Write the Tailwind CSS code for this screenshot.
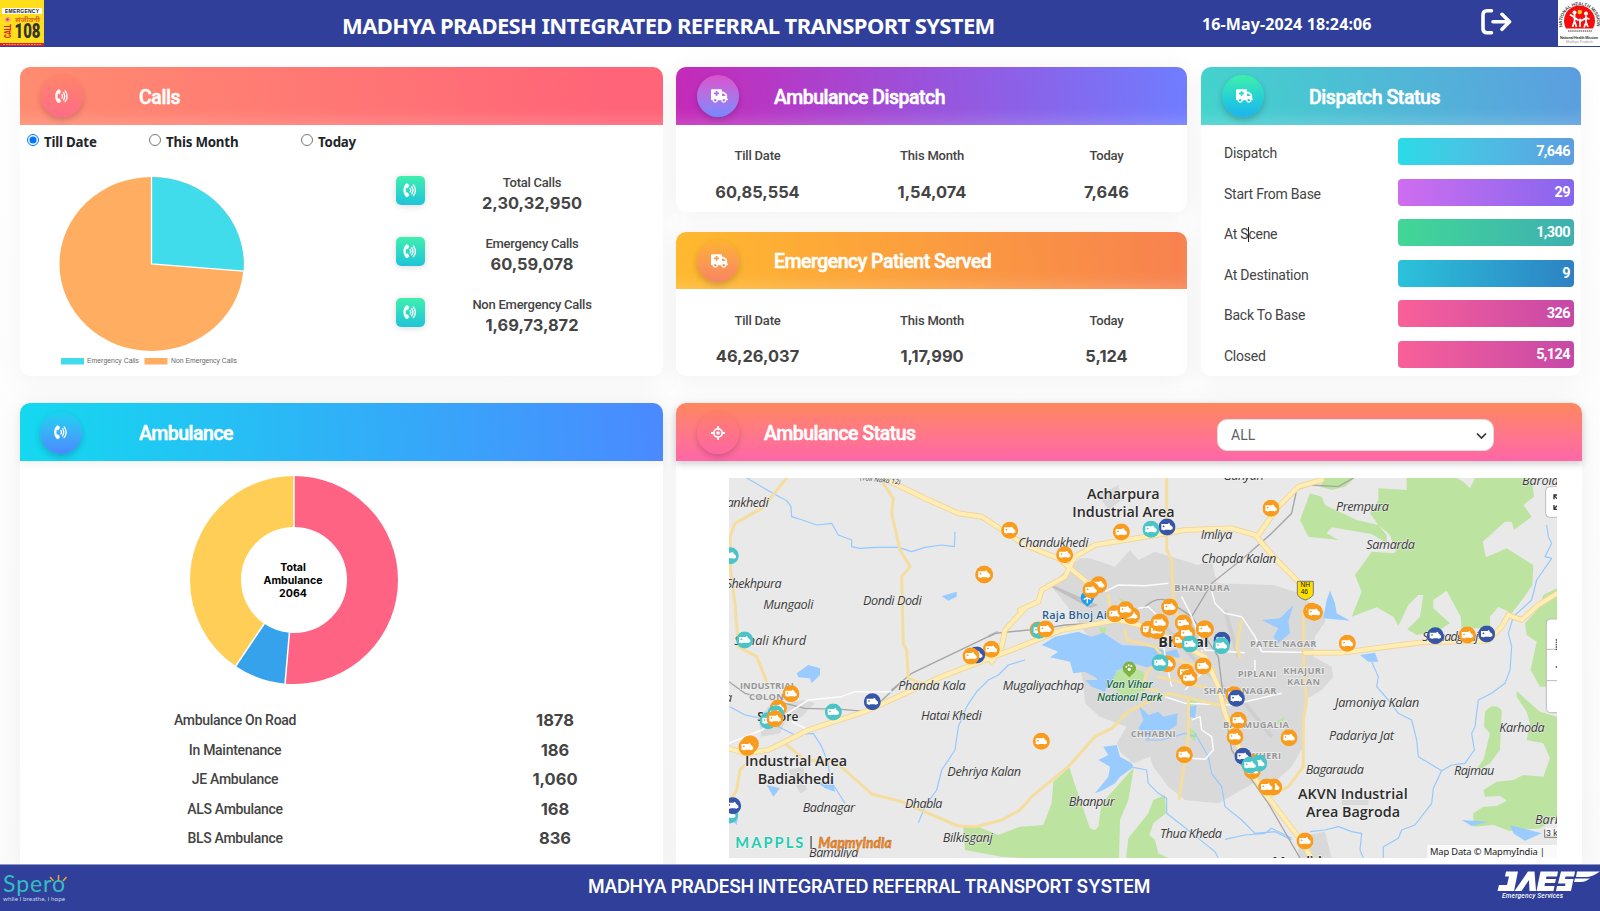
<!DOCTYPE html>
<html lang="en">
<head>
<meta charset="utf-8">
<title>Madhya Pradesh Integrated Referral Transport System</title>
<script src="https://cdn.jsdelivr.net/npm/@tailwindcss/browser@4"></script>
</head>
<body class="bg-white overflow-hidden h-[911px] w-[1600px] flex flex-col font-['Roboto',sans-serif] text-[#444]">

<!-- Icon definitions -->
<svg class="hidden">
  <symbol id="phone" viewBox="0 0 470 512">
    <path fill="currentColor" stroke="currentColor" stroke-width="14" d="M97.333 490.966c-129.874-129.874-129.681-340.252 0-469.933 5.698-5.698 14.527-6.632 21.263-2.422l64.817 40.513a17.187 17.187 0 0 1 6.849 20.958l-32.408 81.021a17.188 17.188 0 0 1-17.669 10.719l-55.81-5.58c-21.051 58.261-20.612 122.471 0 179.515l55.811-5.581a17.188 17.188 0 0 1 17.669 10.719l32.408 81.022a17.188 17.188 0 0 1-6.849 20.958l-64.817 40.513a17.19 17.19 0 0 1-21.263-2.422z"/>
    <path fill="none" stroke="currentColor" stroke-width="48" stroke-linecap="round" d="M232 194q38 62 0 124M288 130q88 126 0 252M346 66q144 190 0 380"/>
  </symbol>
  <symbol id="truck" viewBox="0 0 640 512">
    <path fill="currentColor" fill-rule="evenodd" d="M0 48C0 21.5 21.5 0 48 0H368c26.5 0 48 21.5 48 48V96h50.7c17 0 33.3 6.7 45.3 18.7L589.3 192c12 12 18.7 28.3 18.7 45.3V352c17.7 0 32 14.3 32 32s-14.3 32-32 32H576c0 53-43 96-96 96s-96-43-96-96H256c0 53-43 96-96 96s-96-43-96-96H48c-26.5 0-48-21.5-48-48V48zM416 256H544V237.3L466.7 160H416v96zM160 464a48 48 0 1 0 0-96 48 48 0 1 0 0 96zm368-48a48 48 0 1 0-96 0 48 48 0 1 0 96 0zM176 80v48h-48c-8.8 0-16 7.2-16 16v32c0 8.8 7.2 16 16 16h48v48c0 8.8 7.2 16 16 16h32c8.8 0 16-7.2 16-16V192h48c8.8 0 16-7.2 16-16V144c0-8.8-7.2-16-16-16H240V80c0-8.8-7.2-16-16-16H192c-8.8 0-16 7.2-16 16z"/>
  </symbol>
  <symbol id="van" viewBox="-26 -26 52 52">
    <circle r="25.5" fill="currentColor"/>
    <path fill="#fff" fill-rule="evenodd" d="M-17-9H3L4-11H8L9-7L17 0V7H14A4 3 0 0 1 7 8H-6A4 3 0 0 1-13 8H-17ZM-11-5V-3H-13V-1H-11V1H-9V-1H-7V-3H-9V-5Z"/>
  </symbol>
</svg>

<header class="h-[47px] shrink-0 bg-[#30409a] flex items-start text-white">
  <svg class="w-11 h-[46px]" viewBox="0 0 44 46">
    <rect width="44" height="46" fill="#ffdf1b"/>
    <rect x="2" y="8" width="40" height="6" fill="#fff"/>
    <text x="5" y="13" font-family="Liberation Sans" font-weight="700" font-size="5" textLength="34" fill="#222">EMERGENCY</text>
    <circle cx="7.500" cy="19.500" r="2.800" fill="#f3a58a"/><circle cx="7.500" cy="19.500" r="1.200" fill="#d8392b"/>
    <text x="15" y="22" font-family="Noto Sans, sans-serif" font-weight="700" font-size="7" textLength="25" lengthAdjust="spacingAndGlyphs" fill="#e06a1c">संजीवनी</text>
    <text x="14.500" y="38" font-family="Roboto" font-weight="900" font-size="20" textLength="26" lengthAdjust="spacingAndGlyphs" fill="#333">108</text>
    <text transform="translate(11 38) rotate(-90)" font-family="Roboto" font-weight="900" font-size="9.500" textLength="14" lengthAdjust="spacingAndGlyphs" fill="#d9261c">CALL</text>
    <rect y="43" width="44" height="3" fill="#d8262b"/>
    <path d="M3 44.500H41" stroke="#f3a0a0" stroke-width=".8" stroke-dasharray="2 .8"/>
  </svg>
  <div class="w-[651px] ml-[298px] mt-[10px] text-[22px] leading-[30px] font-bold font-['Noto_Sans',sans-serif] whitespace-nowrap tracking-[-0.62px]">MADHYA PRADESH INTEGRATED REFERRAL TRANSPORT SYSTEM</div>
  <div class="w-[170px] ml-[209px] mt-[14px] text-[16px] leading-5 font-bold font-['Noto_Sans',sans-serif] whitespace-nowrap tracking-[0.130px]">16-May-2024 18:24:06</div>
  <svg class="w-[31px] h-[27px] mt-2 ml-[109px]" viewBox="0 0 31 27" fill="none" stroke="#fff" stroke-width="3.600" stroke-linecap="round" stroke-linejoin="round"><path d="M10.500 2.800H6Q2 2.800 2 7V20.500Q2 24.700 6 24.700H10.500M12 13.800H28.500M21 6.300L28.500 13.800L21 21.300"/></svg>
  <svg class="w-[42px] h-[46px] ml-[46px]" viewBox="0 0 42 46">
    <rect width="42" height="46" fill="#fff"/>
    <path id="arc" fill="none" d="M4.500 27A17.500 17.500 0 1 1 38.500 27"/>
    <text font-family="Liberation Sans" font-size="4.600" font-weight="700" fill="#444"><textPath href="#arc" textLength="62">NATIONAL HEALTH MISSION</textPath></text>
    <path d="M8 28.500A15.500 15.500 0 1 1 35 28.500Z" fill="#f30d0d"/>
    <circle cx="21.800" cy="12" r="2.200" fill="#ffd21c"/>
    <g fill="#fff"><circle cx="16.500" cy="12.500" r="2"/><circle cx="28" cy="13.500" r="2"/><circle cx="22" cy="20" r="1.500"/></g>
    <path d="M16.500 14v7l-2 6M16.500 21l2 6M12 14.500l4.500 3 4 3M28 15.500v7l-2 5M28 22l2 5M31.500 19l-3.500-1-5 3M22 21v6" stroke="#fff" stroke-width="1.700" fill="none"/>
    <path d="M10 31H34" stroke="#777" stroke-width="1.500" stroke-dasharray="1.500 .6"/>
    <text x="2" y="38.500" font-family="Liberation Sans" font-weight="700" font-size="3.700" textLength="38" fill="#333">National Health Mission</text>
    <text x="8" y="43" font-family="Liberation Sans" font-size="3.500" textLength="27" fill="#999">Madhya Pradesh</text>
  </svg>
</header>

<main class="h-[817px] shrink-0 px-5 pt-[20px] flex flex-col gap-[27px] bg-gradient-to-b from-white to-[#fbfbfb] overflow-hidden">
  <div class="flex h-[309px] shrink-0">

    <section class="w-[643px] shrink-0 rounded-[10px] bg-white shadow-[0_10px_30px_rgba(0,0,0,0.04)]">
      <div class="h-[58px] rounded-t-[10px] flex items-center pl-[21px] bg-[linear-gradient(85deg,#ff8c70,#ff6478_92%)] shadow-[inset_0_-14px_14px_-8px_rgba(255,255,255,0.16)]">
        <div class="size-[42px] rounded-full flex items-center justify-center text-white bg-gradient-to-b from-[#ff8468] to-[#ff6b86] shadow-[0_3px_6px_rgba(0,0,0,0.18)]"><svg class="w-[14px] h-[14.500px]"><use href="#phone"/></svg></div>
        <h2 class="ml-[56px] mt-[3px] text-[19.500px] font-medium text-white [-webkit-text-stroke:0.500px_white] tracking-[-0.4px]">Calls</h2>
      </div>
      <div class="h-[38px] flex items-start pt-[8px] pl-[6.500px] text-[13.300px] leading-[18px] font-bold text-[#212529] font-['Noto_Sans',sans-serif] tracking-[-0.2px]">
        <label class="flex w-[122px]"><input type="radio" name="period" checked class="mt-px size-[12px] accent-[#0075ff] mr-[5.500px]"><span>Till Date</span></label>
        <label class="flex w-[152px]"><input type="radio" name="period" class="mt-px size-[12px] mr-[5.500px]"><span>This Month</span></label>
        <label class="flex"><input type="radio" name="period" class="mt-px size-[12px] mr-[5.500px]"><span>Today</span></label>
      </div>
      <div class="flex h-[213px]">
        <svg class="w-[376px] h-[213px]" viewBox="20 163 376 213">
          <ellipse cx="151.500" cy="264" rx="92" ry="87" fill="#ffad60"/>
          <path d="M151.500 264V177A92 87 0 0 1 243.500 271Z" fill="#41dceb"/>
          <path d="M151.500 177V264L243.500 271.200" fill="none" stroke="#fff" stroke-width="1.300"/>
          <rect x="61" y="358" width="23" height="6.500" fill="#41dceb"/>
          <rect x="144.500" y="358" width="23" height="6.500" fill="#ffad60"/>
          <g font-family="Liberation Sans" font-size="6.800" fill="#666"><text x="87" y="363" textLength="52">Emergency Calls</text><text x="171" y="363" textLength="66">Non Emergency Calls</text></g>
        </svg>
        <div class="flex flex-col gap-[31.800px] pt-[13px]">
          <div class="flex h-[29px]"><div class="size-[29px] rounded-[5px] bg-gradient-to-b from-[#40efac] to-[#1fc3d8] shadow-[0_1px_7px_rgba(0,0,0,0.15)] text-white flex items-center justify-center"><svg class="size-[14.500px]"><use href="#phone"/></svg></div><div class="w-[214px] -mt-px text-center"><div class="text-[13px] leading-4 font-medium tracking-[-0.25px]">Total Calls</div><div class="text-[16.400px] leading-[25px] font-bold font-['Inter',sans-serif]">2,30,32,950</div></div></div>
          <div class="flex h-[29px]"><div class="size-[29px] rounded-[5px] bg-gradient-to-b from-[#40efac] to-[#1fc3d8] shadow-[0_1px_7px_rgba(0,0,0,0.15)] text-white flex items-center justify-center"><svg class="size-[14.500px]"><use href="#phone"/></svg></div><div class="w-[214px] -mt-px text-center"><div class="text-[13px] leading-4 font-medium tracking-[-0.25px]">Emergency Calls</div><div class="text-[16.400px] leading-[25px] font-bold font-['Inter',sans-serif]">60,59,078</div></div></div>
          <div class="flex h-[29px]"><div class="size-[29px] rounded-[5px] bg-gradient-to-b from-[#40efac] to-[#1fc3d8] shadow-[0_1px_7px_rgba(0,0,0,0.15)] text-white flex items-center justify-center"><svg class="size-[14.500px]"><use href="#phone"/></svg></div><div class="w-[214px] -mt-px text-center"><div class="text-[13px] leading-4 font-medium tracking-[-0.25px]">Non Emergency Calls</div><div class="text-[16.400px] leading-[25px] font-bold font-['Inter',sans-serif]">1,69,73,872</div></div></div>
        </div>
      </div>
    </section>

    <div class="w-[511px] shrink-0 ml-[13px] flex flex-col gap-[20px]">
      <section class="h-[145px] rounded-[10px] bg-white shadow-[0_2px_24px_rgba(0,0,0,0.06)]">
        <div class="h-[58px] rounded-t-[10px] flex items-center pl-[21px] bg-[linear-gradient(85deg,#c529b8,#6f7dff)] shadow-[inset_0_-14px_14px_-8px_rgba(255,255,255,0.16)]">
          <div class="size-[42px] rounded-full flex items-center justify-center text-white bg-gradient-to-b from-[#db4fcb] to-[#7388ff] shadow-[0_3px_6px_rgba(0,0,0,0.18)]"><svg class="w-[17px] h-[14px] ml-[3px]"><use href="#truck"/></svg></div>
          <h2 class="ml-[35px] mt-[3px] text-[19.500px] font-medium text-white [-webkit-text-stroke:0.500px_white] tracking-[-0.5px]">Ambulance Dispatch</h2>
        </div>
        <div class="flex text-center pt-[21px] pl-[7px]">
          <div class="w-[149px]"><div class="text-[13px] leading-5 font-medium tracking-[-0.2px]">Till Date</div><div class="mt-[14px] text-[16.400px] leading-6 font-bold font-['Inter',sans-serif]">60,85,554</div></div>
          <div class="w-[200px]"><div class="text-[13px] leading-5 font-medium tracking-[-0.2px]">This Month</div><div class="mt-[14px] text-[16.400px] leading-6 font-bold font-['Inter',sans-serif]">1,54,074</div></div>
          <div class="w-[149px]"><div class="text-[13px] leading-5 font-medium tracking-[-0.2px]">Today</div><div class="mt-[14px] text-[16.400px] leading-6 font-bold font-['Inter',sans-serif]">7,646</div></div>
        </div>
      </section>
      <section class="h-[144px] rounded-[10px] bg-white shadow-[0_2px_24px_rgba(0,0,0,0.06)]">
        <div class="h-[57px] rounded-t-[10px] flex items-center pl-[21px] bg-[linear-gradient(85deg,#ffb92e,#f7814f)] shadow-[inset_-6px_-14px_14px_-8px_rgba(255,255,255,0.16)]">
          <div class="size-[42px] rounded-full flex items-center justify-center text-white bg-gradient-to-b from-[#fdb22e] to-[#f88462] shadow-[0_3px_6px_rgba(0,0,0,0.18)]"><svg class="w-[17px] h-[14px] ml-[3px]"><use href="#truck"/></svg></div>
          <h2 class="ml-[35px] mt-[3px] text-[19.500px] font-medium text-white [-webkit-text-stroke:0.500px_white] tracking-[-0.5px]">Emergency Patient Served</h2>
        </div>
        <div class="flex text-center pt-[22px] pl-[7px]">
          <div class="w-[149px]"><div class="text-[13px] leading-5 font-medium tracking-[-0.2px]">Till Date</div><div class="mt-[13px] text-[16.400px] leading-6 font-bold font-['Inter',sans-serif]">46,26,037</div></div>
          <div class="w-[200px]"><div class="text-[13px] leading-5 font-medium tracking-[-0.2px]">This Month</div><div class="mt-[13px] text-[16.400px] leading-6 font-bold font-['Inter',sans-serif]">1,17,990</div></div>
          <div class="w-[149px]"><div class="text-[13px] leading-5 font-medium tracking-[-0.2px]">Today</div><div class="mt-[13px] text-[16.400px] leading-6 font-bold font-['Inter',sans-serif]">5,124</div></div>
        </div>
      </section>
    </div>

    <section class="w-[380px] shrink-0 ml-[14px] rounded-[10px] bg-white shadow-[0_10px_30px_rgba(0,0,0,0.04)]">
      <div class="h-[58px] rounded-t-[10px] flex items-center pl-[21px] bg-[linear-gradient(75deg,#43d4cc,#5c9de0)] shadow-[inset_0_-14px_14px_-8px_rgba(255,255,255,0.16)]">
        <div class="size-[42px] rounded-full flex items-center justify-center text-white bg-gradient-to-b from-[#40efa8] to-[#1db4f0] shadow-[0_3px_6px_rgba(0,0,0,0.22)]"><svg class="w-[17px] h-[14px] ml-[3px]"><use href="#truck"/></svg></div>
        <h2 class="ml-[45px] mt-[3px] text-[19.500px] font-medium text-white [-webkit-text-stroke:0.500px_white] tracking-[-0.45px]">Dispatch Status</h2>
      </div>
      <div class="flex flex-col gap-[13.500px] pt-[13px] pl-[23px] pr-[7px] text-[14px] tracking-[-0.25px]">
        <div class="flex h-[27px] justify-between"><span class="leading-[31px]">Dispatch</span><span class="w-[176px] rounded-[4px] pr-1 text-right leading-[27px] font-bold text-[14.500px] tracking-[-0.6px] text-white bg-gradient-to-r from-[#29dbe6] to-[#5c9fe0]">7,646</span></div>
        <div class="flex h-[27px] justify-between"><span class="leading-[31px]">Start From Base</span><span class="w-[176px] rounded-[4px] pr-1 text-right leading-[27px] font-bold text-[14.500px] tracking-[-0.6px] text-white bg-gradient-to-r from-[#cf6cef] to-[#8566ee]">29</span></div>
        <div class="flex h-[27px] justify-between"><span class="leading-[31px] relative">At Scene<span class="absolute left-[24px] top-[8px] w-px h-[15px] bg-[#222]"></span></span><span class="w-[176px] rounded-[4px] pr-1 text-right leading-[27px] font-bold text-[14.500px] tracking-[-0.6px] text-white bg-gradient-to-r from-[#42d795] to-[#3eb0b0]">1,300</span></div>
        <div class="flex h-[27px] justify-between"><span class="leading-[31px]">At Destination</span><span class="w-[176px] rounded-[4px] pr-1 text-right leading-[27px] font-bold text-[14.500px] tracking-[-0.6px] text-white bg-gradient-to-r from-[#2bc2da] to-[#2d82c3]">9</span></div>
        <div class="flex h-[27px] justify-between"><span class="leading-[31px]">Back To Base</span><span class="w-[176px] rounded-[4px] pr-1 text-right leading-[27px] font-bold text-[14.500px] tracking-[-0.6px] text-white bg-gradient-to-r from-[#f96098] to-[#c648a7]">326</span></div>
        <div class="flex h-[27px] justify-between"><span class="leading-[31px]">Closed</span><span class="w-[176px] rounded-[4px] pr-1 text-right leading-[27px] font-bold text-[14.500px] tracking-[-0.6px] text-white bg-gradient-to-r from-[#f96098] to-[#c648a7]">5,124</span></div>
      </div>
    </section>
  </div>

  <div class="flex h-[470px] shrink-0">
    <section class="w-[643px] shrink-0 rounded-t-[10px] bg-white shadow-[0_0_24px_rgba(0,0,0,0.05)]">
      <div class="h-[58px] rounded-t-[10px] flex items-center pl-[20px] bg-[linear-gradient(87deg,#14d9ef,#4b89ff)] shadow-[0_3px_8px_rgba(0,0,0,0.06)]">
        <div class="size-[42px] mt-px rounded-full flex items-center justify-center text-white bg-gradient-to-b from-[#1ad2f0] to-[#4a88ff] shadow-[0_3px_6px_rgba(0,0,0,0.18)]"><svg class="w-[14px] h-[14.500px]"><use href="#phone"/></svg></div>
        <h2 class="ml-[57px] mt-[3px] text-[19.500px] font-medium text-white [-webkit-text-stroke:0.500px_white] tracking-[-0.5px]">Ambulance</h2>
      </div>
      <svg class="w-[643px] h-[245px]" viewBox="20 461 643 245">
        <g transform="translate(294 580)" fill="none" stroke-width="51">
          <circle r="78.500" stroke="#ff6384" pathLength="2064" stroke-dasharray="1060 2064" transform="rotate(-90)"/>
          <circle r="78.500" stroke="#36a2eb" pathLength="2064" stroke-dasharray="168 2064" stroke-dashoffset="-1060" transform="rotate(-90)"/>
          <circle r="78.500" stroke="#ffce56" pathLength="2064" stroke-dasharray="836 2064" stroke-dashoffset="-1228" transform="rotate(-90)"/>
          <path d="M0-104V-52M-4.500 52L-9 104M-29.300 43L-58.600 86.500" stroke="#fff" stroke-width="1.500"/>
        </g>
        <g font-family="Inter" font-size="10.600" font-weight="700" fill="#000" text-anchor="middle"><text x="293" y="570.500">Total</text><text x="293" y="583.500">Ambulance</text><text x="293" y="596.500">2064</text></g>
      </svg>
      <div class="flex flex-col text-center leading-[29.500px]">
        <div class="flex pl-[107px]"><span class="w-[216px] text-[14px] font-medium tracking-[-0.3px]">Ambulance On Road</span><span class="ml-[104px] w-[216px] text-[16.500px] font-bold font-['Inter',sans-serif]">1878</span></div>
        <div class="flex pl-[107px]"><span class="w-[216px] text-[14px] font-medium tracking-[-0.3px]">In Maintenance</span><span class="ml-[104px] w-[216px] text-[16.500px] font-bold font-['Inter',sans-serif]">186</span></div>
        <div class="flex pl-[107px]"><span class="w-[216px] text-[14px] font-medium tracking-[-0.3px]">JE Ambulance</span><span class="ml-[104px] w-[216px] text-[16.500px] font-bold font-['Inter',sans-serif]">1,060</span></div>
        <div class="flex pl-[107px]"><span class="w-[216px] text-[14px] font-medium tracking-[-0.3px]">ALS Ambulance</span><span class="ml-[104px] w-[216px] text-[16.500px] font-bold font-['Inter',sans-serif]">168</span></div>
        <div class="flex pl-[107px]"><span class="w-[216px] text-[14px] font-medium tracking-[-0.3px]">BLS Ambulance</span><span class="ml-[104px] w-[216px] text-[16.500px] font-bold font-['Inter',sans-serif]">836</span></div>
      </div>
    </section>

    <section class="w-[906px] shrink-0 ml-[13px] rounded-t-[10px] bg-white shadow-[0_0_24px_rgba(0,0,0,0.05)]">
      <div class="h-[58px] rounded-t-[10px] flex items-center pl-[21px] bg-gradient-to-b from-[#ff875c] to-[#ff66a8] shadow-[0_3px_7px_rgba(0,0,0,0.2)]">
        <div class="size-[42px] mt-px rounded-full flex items-center justify-center bg-gradient-to-b from-[#ff7e68] to-[#ff66a2] shadow-[0_3px_6px_rgba(0,0,0,0.18)]">
          <svg class="size-[14px]" viewBox="0 0 15 15" fill="none" stroke="#fff" stroke-width="1.900"><circle cx="7.500" cy="7.500" r="4.500"/><circle cx="7.500" cy="7.500" r="1.900" fill="#fff" stroke="none"/><path d="M7.500 .5V3M7.500 12V14.500M.5 7.500H3M12 7.500H14.500" stroke-linecap="round"/></svg>
        </div>
        <h2 class="ml-[25px] mt-[3px] w-[200px] text-[19.500px] font-medium text-white [-webkit-text-stroke:0.500px_white] tracking-[-0.5px]">Ambulance Status</h2>
        <div class="ml-[253px] mt-[5px] w-[277px] h-8 rounded-[10px] bg-white border border-[#ddd] flex items-center justify-between pl-[13px] pr-[6px] text-[14px] text-[#5c6268]"><span class="mt-px">ALL</span><svg class="w-[11px] h-[8px] mt-0.5" viewBox="0 0 11 8" fill="none" stroke="#333" stroke-width="1.700"><path d="M1 1.500L5.500 6L10 1.500"/></svg></div>
      </div>

      <!-- Map: three units per pixel -->
      <svg class="ml-[53px] mt-[17px] w-[828px] h-[380px]" viewBox="12 24 2484 1140">
        <rect x="12" y="24" width="2484" height="1140" fill="#e9e9e9"/>
        <g fill="#d9d9d9">
          <path d="M975 345L1065 265H1095L1170 290L1215 240L1240 270L1290 245L1420 285L1460 270L1475 340L1645 345L1725 370L1765 410L1800 425V455L1770 500L1765 560L1820 590L1825 620L1790 660L1740 690L1735 830L1700 890L1655 930L1585 940L1480 1000L1380 990L1330 950L1285 890L1275 860L1225 880L1185 845L1175 820L1205 770L1125 740L1080 700L1075 640L1060 560L1090 500L1020 400Z"/>
          <path d="M100 745L130 710L240 690L270 700L230 740L180 755L165 790L110 800Z"/>
          <path d="M1120 75L1180 45L1190 90L1150 120ZM190 900L235 890L245 960L225 970Z"/>
          <path d="M1720 1100L1800 1085L1820 1164H1720ZM1850 990H1930V1005H1850Z"/>
        </g>
        <path fill="none" stroke="#cfcfcf" stroke-width="12" d="M1320 470L1400 560L1480 640L1560 700L1640 800M1380 420L1420 520M1500 420L1540 560"/>
        <g fill="#bde3a0">
          <path d="M2045 24H2420L2427 80L2395 105L2420 140L2367 180L2360 155H2340L2273 215L2283 262L2345 235L2425 285L2422 345L2395 385L2360 430L2320 410L2295 440V475H2255L2210 478L2207 440L2165 362L2125 390V415L2175 460L2135 485L2075 495L2047 478L2085 440L2095 375H2080L2050 405L2020 468L2005 440L1955 412L1880 440L1910 365L1890 315L1940 245L2005 250L2013 245L1995 195L1960 165L1935 130L1960 90V55L2045 60Z"/>
          <path d="M1725 150L1755 70L1790 80L1800 105L1895 150L1960 165L1985 195V220L1940 192L1820 172L1805 190L1840 210L1750 200Z"/>
          <path d="M1785 50L1800 24H1890L1860 50L1820 60Z"/>
          <path d="M2496 355L2455 375L2445 410L2400 460L2405 495L2435 515L2417 600L2445 650H2496Z"/>
          <path d="M2280 725Q2305 695 2330 720L2325 840L2295 880L2245 910L2275 870L2295 790L2277 770Z"/>
          <path d="M2375 662L2405 690L2445 725L2496 740V1045L2445 1075L2355 1083L2305 1065L2245 1070V1030L2275 1010L2315 1008L2345 992L2325 978L2280 980L2275 960L2315 935L2365 930L2395 915L2455 920L2475 865L2455 820L2405 810L2415 760L2405 725L2375 680Z"/>
          <path d="M715 1070H760L820 1095L885 1070L955 1065L980 1000L985 935L1033 892L1050 945L1095 1075L1110 1080L1120 1070L1130 1000L1175 950L1227 892L1210 990L1185 1050L1182 1164H885L830 1160L720 1140Z"/>
          <path d="M1203 1164L1210 1105L1270 1030L1285 990L1320 975L1323 1030L1285 1060L1273 1095L1290 1110L1300 1150L1330 1164Z"/>
          <path d="M1160 650L1170 605L1215 590L1255 605L1265 660L1200 680Z"/>
          <path d="M1180 380L1210 400L1200 415ZM1120 470L1145 475L1135 505ZM1395 690L1420 680L1415 700L1395 710ZM1390 770L1415 790L1410 815L1395 800ZM1650 755L1680 740L1670 765Z"/>
        </g>
        <path d="M2195 24H2250L2235 55L2215 35Z" fill="#e9e9e9"/>
        <g fill="#99cbff">
          <path d="M950 525L990 500L1060 485L1100 500L1135 488L1190 525L1285 530L1325 545L1355 538L1365 560L1325 575L1265 592L1225 580L1175 602L1155 650L1130 660L1115 625L1080 605L1045 610L1035 575L975 562L1000 545Z"/>
          <path d="M1240 705L1270 735L1300 725L1315 740L1358 730L1355 765L1330 782L1285 780L1270 810L1240 775L1255 750Z"/>
          <path d="M1135 830L1175 825L1185 860L1220 880L1225 892L1185 920L1170 940L1135 960L1110 970L1150 920L1155 890L1120 870L1150 855ZM1080 630L1150 630L1140 665L1100 650Z"/>
          <path d="M1705 405L1685 425L1665 445L1610 450L1660 475L1645 500L1660 520L1695 490L1690 455Z"/>
          <path d="M1815 362L1830 400L1835 430L1875 452L1795 445L1805 390ZM1905 555L1950 548L1960 575L1930 575Z"/>
          <path d="M215 610L250 585L285 595V615L260 640L255 625L220 622ZM650 378L695 365V380L670 392ZM125 945L165 955L145 980ZM280 940L325 930L330 965L300 955ZM15 1045L40 1035L35 1065Z"/>
          <path d="M2355 1065L2450 1090L2400 1112L2365 1090ZM2210 1050L2290 1055L2240 1068ZM1395 710L1415 705L1410 745L1395 740Z"/>
        </g>
        <g fill="none" stroke="#94c9ff" stroke-width="3.500" stroke-linejoin="round">
          <path d="M65 24L130 62L185 92L198 110L200 140L232 150L275 165L320 160L340 195L380 210V230L405 235L450 232L520 232L560 245L600 232L650 225L688 230L690 185"/>
          <path d="M900 570L850 585L820 615L790 630L755 665L725 710L700 770L690 840L650 900L635 960L600 1010L580 1058"/>
          <path d="M15 710L60 735L110 745L160 770L210 795L265 790L290 830L310 880L315 930L335 960L360 1000"/>
          <path d="M2465 165L2470 200L2480 220L2460 260L2480 265L2435 330L2420 390L2365 440L2350 490L2360 530L2355 600L2340 640L2300 670L2260 690L2250 770L2240 790L2248 840L2220 880L2180 885L2150 902L2125 955L2120 1000L2070 1065L2030 1080L2020 1105L1975 1130V1164"/>
          <path d="M1940 575L1960 620L1955 650L1990 690L2020 730L2060 750L2075 810L2080 860L2150 902"/>
          <path d="M1225 892L1265 900L1270 940L1300 970L1325 985V1030L1370 1065L1420 1105L1470 1145L1480 1164"/>
          <path d="M1410 790L1450 860L1460 910L1490 950L1500 1010L1550 1050L1590 1090L1650 1085L1700 1110M1500 1108L1560 1095L1620 1090L1640 1075L1700 1105M1260 810L1310 810L1380 790L1410 800M1755 1085L1800 1080L1840 1070L1880 1085L1910 1090L1905 1140L1915 1164"/>
        </g>
        <g fill="none" stroke="#a5a5a5" stroke-width="4">
          <path d="M500 660L560 610L810 490L960 475L1020 465L1200 455M12 635L60 670L180 700L240 715L350 718L420 724L450 710L520 645"/>
          <path d="M1255 415Q1300 370 1340 400L1400 440L1480 560L1500 720L1520 840L1560 900L1630 1000L1725 1164M1400 440L1460 340L1560 260L1640 190L1700 130L1715 60L1755 45L1840 50L1885 24"/>
          <path d="M975 345L1110 405L1095 410ZM790 500L820 485" stroke-width="7" opacity=".5"/>
        </g>
        <g fill="none" stroke="#fff" stroke-width="4.500" stroke-linejoin="round" opacity=".9">
          <path d="M1140 365L1180 345L1260 347L1330 340M1455 345L1470 400L1500 430L1550 440L1590 500L1610 545L1800 548M1240 415L1270 410L1310 450M1370 380L1400 440L1440 540L1560 548M1380 660L1440 600L1430 540M1395 865L1440 868L1465 840L1460 800L1430 780L1425 740L1400 750M1320 680L1380 700L1520 705L1670 670M1310 440L1320 560L1340 650M1590 570V620"/>
          <path d="M12 820L60 800L110 780L250 690L350 680L390 665L500 665M200 755L250 780"/>
        </g>
        <g fill="none" stroke="#f5dd9d" stroke-linejoin="round" stroke-linecap="round">
          <g stroke-width="9">
            <path d="M185 24L140 80L110 115L30 160L15 200V290L30 400L40 530L95 560L125 635M475 40L505 85L500 130L525 240L555 290L530 320L535 520L545 540L550 625L590 640M12 1000L35 960L45 900L65 880M180 820L240 870L330 875L360 900L440 972L530 995L610 1030L700 1068L755 1070L830 1050L885 1020L920 980L1030 890L1110 800L1160 775L1210 725L1260 700L1330 670L1480 705L1520 690"/>
            <path d="M1325 24V240L1340 270L1345 400L1375 480M1390 690V800L1380 870L1362 985M1550 450L1535 530L1545 560M1735 420V560L1740 650L1745 690L1735 750V890L1690 950L1640 975M1200 480L1205 510L1290 530L1320 570M1330 560L1270 600L1250 650L1300 665M1150 375L1155 410L1200 440M1735 545L1850 548M1330 560L1420 590L1470 600M1300 620L1380 640L1440 650"/>
          </g>
        </g>
        <g fill="none" stroke="#efd592" stroke-width="17" stroke-linejoin="round" stroke-linecap="round">
          <path d="M490 32L600 85L700 130L770 140L900 225L1000 265L1090 340M12 835L60 850L130 840L250 780L420 725L530 675L650 620L885 530L1010 480L1180 450L1260 470L1360 520L1440 560L1480 650L1500 730L1560 880L1620 970L1720 1100L1760 1164M885 420L940 395L950 360L1020 320L1050 260L1110 225L1325 190L1380 180L1520 175L1590 195L1650 265L1720 335M1600 195L1660 110L1720 50L1790 30M800 575L830 530L840 480L900 415M1740 548L1850 548L1950 535L2090 517L2290 512L2330 470L2350 435L2390 450L2440 405L2496 370"/>
        </g>
        <g fill="none" stroke="#ffedb5" stroke-width="12" stroke-linejoin="round" stroke-linecap="round">
          <path d="M490 32L600 85L700 130L770 140L900 225L1000 265L1090 340M12 835L60 850L130 840L250 780L420 725L530 675L650 620L885 530L1010 480L1180 450L1260 470L1360 520L1440 560L1480 650L1500 730L1560 880L1620 970L1720 1100L1760 1164M885 420L940 395L950 360L1020 320L1050 260L1110 225L1325 190L1380 180L1520 175L1590 195L1650 265L1720 335M1600 195L1660 110L1720 50L1790 30M800 575L830 530L840 480L900 415M1740 548L1850 548L1950 535L2090 517L2290 512L2330 470L2350 435L2390 450L2440 405L2496 370"/>
        </g>

        <g font-family="Open Sans, Noto Sans, sans-serif" font-size="38" font-style="italic" fill="#3a3a3a" stroke="#f0f0f0" stroke-width="3" paint-order="stroke">
          <text x="5" y="110" textLength="126">ankhedi</text><text x="2" y="353" textLength="168">Shekhpura</text><text x="115" y="416" textLength="150">Mungaoli</text><text x="414" y="404" textLength="176">Dondi Dodi</text><text x="28" y="525" textLength="215">Sonali Khurd</text>
          <text x="520" y="661" textLength="202">Phanda Kala</text><text x="833" y="661" textLength="244">Mugaliyachhap</text><text x="588" y="749" textLength="182">Hatai Khedi</text><text x="667" y="917" textLength="221">Dehriya Kalan</text><text x="540" y="1014" textLength="112">Dhabla</text><text x="653" y="1115" textLength="150">Bilkisganj</text><text x="233" y="1026" textLength="157">Badnagar</text><text x="252" y="1160" textLength="148">Bamuliya</text><text x="0" y="696">a</text>
          <text x="1495" y="30" textLength="122">Ganyari</text><text x="880" y="231" textLength="210">Chandukhedi</text><text x="1427" y="206" textLength="95">Imliya</text><text x="1429" y="279" textLength="225">Chopda Kalan</text><text x="1031" y="1008" textLength="138">Bhanpur</text><text x="1305" y="1104" textLength="186">Thua Kheda</text><text x="1742" y="913" textLength="175">Bagarauda</text>
          <text x="1833" y="123" textLength="159">Prempura</text><text x="1924" y="236" textLength="146">Samarda</text><text x="2391" y="46" textLength="110">Barola</text><text x="2092" y="512" textLength="168">Samadganj</text><text x="1830" y="710" textLength="253">Jamoniya Kalan</text><text x="1812" y="811" textLength="195">Padariya Jat</text><text x="2187" y="914" textLength="121">Rajmau</text><text x="2323" y="785" textLength="136">Karhoda</text><text x="2430" y="1062">Barbatpur</text>
          <text x="405" y="30" font-size="20" transform="rotate(6 405 30)">(Toll Naka 12)</text>
          <g fill="#176845" font-size="33" font-weight="600"><text x="1144" y="653" textLength="139">Van Vihar</text><text x="1116" y="694" textLength="196">National Park</text></g>
        </g>
        <g font-family="Open Sans, Noto Sans, sans-serif" font-size="43" font-weight="600" fill="#2c2c2c" stroke="#f2f2f2" stroke-width="4" paint-order="stroke">
          <text x="60" y="888" textLength="306">Industrial Area</text><text x="98" y="942" textLength="229">Badiakhedi</text><text x="1086" y="88" textLength="218">Acharpura</text><text x="1042" y="142" textLength="307">Industrial Area</text><text x="1719" y="987" textLength="329">AKVN Industrial</text><text x="1743" y="1041" textLength="282">Area Bagroda</text><text x="1642" y="1190" textLength="220">Mandideep</text>
          <text x="97" y="752" font-size="36" textLength="123">Sehore</text><text x="1300" y="531" font-weight="700" textLength="150">Bhopal</text>
          <text x="951" y="446" font-size="33" fill="#1e5f92" textLength="279">Raja Bhoj Airport</text>
        </g>
        <g font-family="Open Sans, Noto Sans, sans-serif" font-size="28" font-weight="700" fill="#979797" stroke="#efefef" stroke-width="4" paint-order="stroke">
          <text x="45" y="656" textLength="168">INDUSTRIAL</text><text x="72" y="690" textLength="123">COLONY</text><text x="1348" y="363" textLength="166">BHANPURA</text><text x="1575" y="532" textLength="199">PATEL NAGAR</text><text x="1538" y="620" textLength="116">PIPLANI</text><text x="1675" y="611" textLength="123">KHAJURI</text><text x="1686" y="645" textLength="99">KALAN</text><text x="1436" y="671" textLength="218">SHAKTI NAGAR</text><text x="1494" y="775" textLength="198">BAGMUGALIA</text><text x="1217" y="800" textLength="135">CHHABNI</text><text x="1582" y="868" textLength="86">KHERI</text>
        </g>

        <!-- Points of interest -->
        <path d="M1717 334H1765V370Q1765 382 1741 390Q1717 382 1717 370Z" fill="#ffdf00" stroke="#777" stroke-width="3"/>
        <g font-family="Liberation Sans" font-size="20" fill="#111" text-anchor="middle"><text x="1741" y="352">NH</text><text x="1738" y="372">46</text></g>
        <path d="M1087 410L1071 395A20 20 0 1 1 1103 395Z" fill="#1e9df2"/><path d="M1087 372V400M1076 389L1087 382L1098 389" stroke="#fff" stroke-width="4" fill="none"/>
        <path d="M1213 622L1203 612A20 20 0 1 1 1223 612Z" fill="#7cb342"/><g fill="#fff"><circle cx="1213" cy="598" r="5"/><circle cx="1204" cy="590" r="3"/><circle cx="1211" cy="586" r="3"/><circle cx="1219" cy="588" r="3"/></g>

        <!-- Ambulance markers, grouped by vehicle state colour -->
        <g class="text-[#f99b1c]">
          <use href="#van" x="828" y="155" width="52" height="52"/><use href="#van" x="750" y="286" width="55" height="55"/><use href="#van" x="773" y="512" width="52" height="52"/>
          <use href="#van" x="172" y="645" width="52" height="52"/><use href="#van" x="134" y="688" width="52" height="52"/><use href="#van" x="48" y="795" width="54" height="54"/><use href="#van" x="40" y="804" width="54" height="54"/>
          <use href="#van" x="1612" y="89" width="52" height="52"/><use href="#van" x="1163" y="160" width="52" height="52"/><use href="#van" x="993" y="228" width="52" height="52"/><use href="#van" x="1095" y="318" width="52" height="52"/><use href="#van" x="1072" y="334" width="52" height="52"/><use href="#van" x="1194" y="411" width="52" height="52"/><use href="#van" x="1144" y="405" width="52" height="52"/><use href="#van" x="1176" y="393" width="52" height="52"/><use href="#van" x="1308" y="385" width="52" height="52"/>
          <use href="#van" x="1245" y="452" width="52" height="52"/><use href="#van" x="1269" y="456" width="52" height="52"/><use href="#van" x="1276" y="430" width="56" height="56"/><use href="#van" x="1349" y="433" width="52" height="52"/><use href="#van" x="1341" y="484" width="52" height="52"/><use href="#van" x="1359" y="464" width="52" height="52"/><use href="#van" x="1412" y="450" width="55" height="55"/>
          <use href="#van" x="1301" y="555" width="52" height="52"/><use href="#van" x="1408" y="562" width="52" height="52"/><use href="#van" x="1356" y="581" width="52" height="52"/><use href="#van" x="1366" y="598" width="52" height="52"/><use href="#van" x="913" y="454" width="52" height="52"/>
          <use href="#van" x="1734" y="398" width="52" height="52"/><use href="#van" x="1742" y="401" width="52" height="52"/><use href="#van" x="1841" y="494" width="52" height="52"/><use href="#van" x="2201" y="469" width="52" height="52"/>
          <use href="#van" x="923" y="788" width="52" height="52"/><use href="#van" x="1352" y="828" width="52" height="52"/><use href="#van" x="1501" y="648" width="52" height="52"/><use href="#van" x="1514" y="725" width="52" height="52"/><use href="#van" x="1504" y="774" width="52" height="52"/><use href="#van" x="1666" y="777" width="52" height="52"/><use href="#van" x="1556" y="876" width="52" height="52"/><use href="#van" x="1552" y="850" width="52" height="52"/><use href="#van" x="1620" y="925" width="52" height="52"/><use href="#van" x="1599" y="925" width="52" height="52"/><use href="#van" x="1714" y="1087" width="52" height="52"/>
        </g>
        <g class="text-[#3756a8]"><use href="#van" x="729" y="529" width="52" height="52"/><use href="#van" x="1300" y="145" width="52" height="52"/><use href="#van" x="1465" y="485" width="52" height="52"/><use href="#van" x="2105" y="471" width="52" height="52"/><use href="#van" x="2259" y="466" width="52" height="52"/><use href="#van" x="416" y="669" width="52" height="52"/><use href="#van" x="1508" y="659" width="52" height="52"/><use href="#van" x="1528" y="833" width="52" height="52"/></g>
        <g class="text-[#4bc4c8]"><use href="#van" x="-10" y="231" width="52" height="52"/><use href="#van" x="33" y="484" width="52" height="52"/><use href="#van" x="1252" y="152" width="52" height="52"/><use href="#van" x="1369" y="496" width="52" height="52"/><use href="#van" x="1463" y="501" width="52" height="52"/><use href="#van" x="1279" y="552" width="52" height="52"/><use href="#van" x="917" y="455" width="52" height="52"/><use href="#van" x="126" y="705" width="52" height="52"/><use href="#van" x="103" y="726" width="52" height="52"/><use href="#van" x="299" y="700" width="52" height="52"/><use href="#van" x="-12" y="1009" width="52" height="52"/><use href="#van" x="1575" y="854" width="52" height="52"/><use href="#van" x="1549" y="859" width="52" height="52"/></g>
        <g class="text-[#f99b1c]"><use href="#van" x="712" y="532" width="52" height="52"/><use href="#van" x="936" y="451" width="52" height="52"/><use href="#van" x="124" y="720" width="52" height="52"/></g>
        <use class="text-[#3756a8]" href="#van" x="-3" y="981" width="52" height="52"/>

        <!-- Controls and attribution -->
        <g fill="#fff" stroke="#bbb" stroke-width="3"><rect x="2462" y="50" width="60" height="92" rx="12"/><rect x="2464" y="447" width="60" height="281" rx="12"/><path d="M2464 538H2496M2464 632H2496"/></g>
        <path d="M2496 75H2487V88M2487 76L2496 86M2487 105V118H2496M2487 117L2496 107" fill="none" stroke="#333" stroke-width="4"/>
        <path d="M2494 508V540" stroke="#444" stroke-width="4" stroke-dasharray="4 3"/><path d="M2494 588V594" stroke="#444" stroke-width="3"/>
        <path d="M2461 1074H2496V1100H2461Z" fill="#fff" fill-opacity=".6"/>
        <path d="M2459 1078V1102H2496" fill="none" stroke="#777" stroke-width="3"/>
        <text x="2463" y="1097" font-family="Liberation Sans" font-size="26" fill="#333">3 km</text>
        <rect x="2107" y="1125" width="389" height="39" fill="#fff" fill-opacity=".75"/>
        <text x="2115" y="1156" font-family="Noto Sans" font-size="28" fill="#222" textLength="345">Map Data © MapmyIndia |</text>
        <g stroke="#f4f4f4" stroke-width="4" paint-order="stroke"><text x="31" y="1133" font-family="Lato" font-weight="700" font-size="44" fill="#21cdb0" textLength="204">MAPPLS</text><text x="253" y="1132" font-family="Lato" font-size="42" fill="#222">|</text></g>
        <text x="280" y="1133" font-family="Lato" font-style="italic" font-weight="900" font-size="45" fill="#f08a2c" stroke="#a8601f" stroke-width="1" textLength="220" lengthAdjust="spacingAndGlyphs">MapmyIndia</text>
      </svg>
    </section>
  </div>
</main>

<footer class="h-[47px] shrink-0 bg-[#30409a] border-t border-[#8f98c9] flex items-start text-white">
  <svg class="w-[80px] h-[46px]" viewBox="0 0 80 46">
    <text x="3" y="27" font-family="Lato" font-size="23" textLength="62" fill="#35bcc0">Spero</text>
    <path d="M50 12L53.500 16M58.500 10V15.500M66.500 12L63 16" stroke="#f0a13a" stroke-width="1.500"/>
    <text x="3" y="36" font-family="Lato" font-size="6.200" textLength="62" fill="#cfd4ec">while i breathe, i hope</text>
  </svg>
  <div class="ml-[508px] mt-[9px] text-[18px] leading-[26px] font-semibold font-['Inter',sans-serif] whitespace-nowrap tracking-[-0.36px]">MADHYA PRADESH INTEGRATED REFERRAL TRANSPORT SYSTEM</div>
  <svg class="w-[104px] h-[46px] ml-auto" viewBox="0 0 104 46" fill="#fff">
    <path d="M10 6.500H22L18 26H1.500L3 20H11L13 11.500H9ZM18.500 26L32 6.500H38.500L40 26H33.500L33 15L25.500 26ZM44.500 6.500H62L61 11.500H50.500L50 14H60L59 18H49L48.500 21H58.500L57.500 26H40.500ZM65 6.500H79L78 11.500H69.500L69 14H77.500L75 26H60L61 21H69L69.500 18.500H62ZM81 6.500H104Q96 12 90 12H80ZM79 13.500H94Q89 17 85 17H78Z"/>
    <text x="6" y="33" font-family="Roboto" font-style="italic" font-size="6.600" font-weight="500" textLength="61">Emergency Services</text>
  </svg>
</footer>
</body>
</html>
